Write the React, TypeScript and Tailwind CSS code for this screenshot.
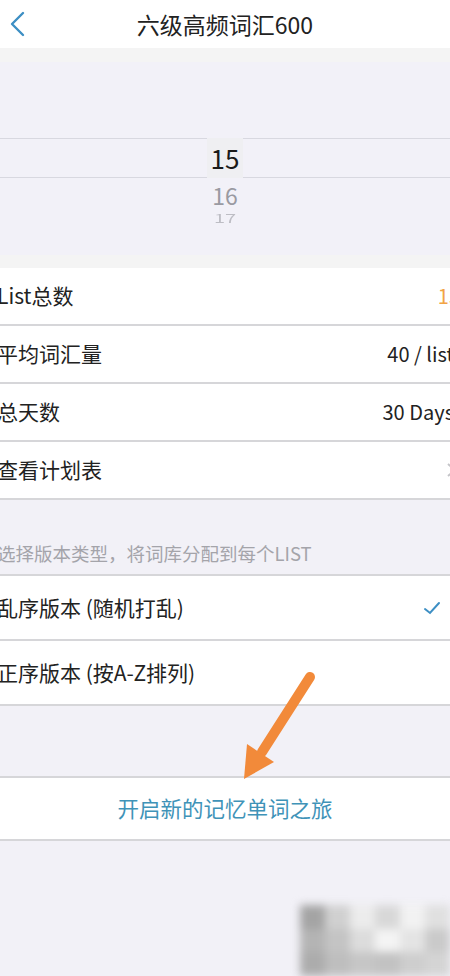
import React from 'react';

const font = { fontFamily: '"Noto Sans CJK SC", "Noto Sans", sans-serif' };

interface RowProps {
  label: string;
  value?: React.ReactNode;
  tall?: boolean;
}

const Row: React.FC<RowProps> = ({ label, value, tall }) => (
  <div
    className={`flex items-center justify-between bg-white border-b-2 border-[#d6d6d9] pl-0 pr-[14px] ${
      tall ? 'h-[65px]' : 'h-[58px]'
    }`}
  >
    <span className="text-[21px] text-[#222] -ml-[3px] whitespace-nowrap">{label}</span>
    {value}
  </div>
);

const App: React.FC = () => {
  return (
    <div className="relative w-[450px] h-[976px] overflow-hidden bg-[#f2f1f7]" style={font}>
      {/* header */}
      <div className="grid grid-cols-[48px_1fr_48px] items-center h-[48px] bg-white">
        <svg width="22" height="30" viewBox="0 0 22 30" className="ml-[6px]">
          <path d="M17 4 L6 15 L17 26" fill="none" stroke="#3d8fc4" strokeWidth="2.4" strokeLinecap="round" strokeLinejoin="round" />
        </svg>
        <h1 className="text-center text-[23px] text-[#222] font-normal">六级高频词汇600</h1>
        <div />
      </div>
      <div className="h-[14px] bg-[#f4f4f4]" />

      {/* picker */}
      <div className="h-[193px] overflow-hidden bg-[#f2f1f8] flex flex-col">
        <div className="h-[76px]" />
        <div className="h-[40px] border-y border-[#d8d8e0] flex items-center justify-center">
          <span className="text-[26px] text-[#1a1a1a] px-[4px] bg-[#efeff2] leading-[40px]">15</span>
        </div>
        <div className="flex flex-col items-center">
          <span className="text-[23px] text-[#9a9aa2] leading-[28px] mt-[3px]">16</span>
          <span className="inline-block text-[20px] text-[#bdbdc4] leading-[18px] scale-y-[0.6]">17</span>
        </div>
      </div>
      <div className="h-[13px] bg-[#f4f4f4]" />

      {/* stats */}
      <div className="-mr-[18px]">
        <Row label="List总数" value={<span className="text-[20px] text-[#f2a444] -mr-[6px]">15</span>} />
        <Row label="平均词汇量" value={<span className="text-[20px] text-[#222]">40 / list</span>} />
        <Row label="总天数" value={<span className="text-[20px] text-[#222]">30 Days</span>} />
        <Row
          label="查看计划表"
          value={
            <svg width="24" height="24" viewBox="0 0 24 24" className="-mr-[12px]">
              <path d="M6 6 L13 12 L6 18" fill="none" stroke="#c4c4c8" strokeWidth="2" />
            </svg>
          }
        />
      </div>

      {/* version section */}
      <div className="h-[74px] flex items-end pb-[6px]">
        <span className="text-[18.5px] text-[#a4a4aa] -ml-[3px] whitespace-nowrap">选择版本类型，将词库分配到每个LIST</span>
      </div>
      <div className="border-t-2 border-[#d6d6d9] -mr-[6px]">
        <Row
          tall
          label="乱序版本 (随机打乱)"
          value={
            <svg width="20" height="20" viewBox="0 0 20 20">
              <path d="M3 11 L8 15 L17 5" fill="none" stroke="#3d8fc4" strokeWidth="2" strokeLinecap="round" />
            </svg>
          }
        />
        <Row tall label="正序版本 (按A-Z排列)" />
      </div>

      <div className="h-[70px]" />
      <div className="h-[65px] bg-white border-y-2 border-[#d6d6d9] flex items-center justify-center">
        <span className="text-[21.5px] text-[#3f93b8]">开启新的记忆单词之旅</span>
      </div>

      {/* blurred watermark */}
      <div className="absolute left-[300px] top-[905px] w-[150px] h-[71px] bg-[#d8d8d8] blur-[4px] grid grid-cols-6 grid-rows-3">
        <div className="bg-[#a4a4a4]" />
        <div className="bg-[#d0d0d0]" />
        <div className="bg-[#ececec]" />
        <div className="bg-[#d8d8d8]" />
        <div className="bg-[#f2f2f2]" />
        <div className="bg-[#e0e0e0]" />
        <div className="bg-[#b4b4b4]" />
        <div className="bg-[#c4c4c4]" />
        <div className="bg-[#dcdcdc]" />
        <div className="bg-[#f4f4f4]" />
        <div className="bg-[#e4e4e4]" />
        <div className="bg-[#cacaca]" />
        <div className="bg-[#acacac]" />
        <div className="bg-[#bebebe]" />
        <div className="bg-[#c6c6c6]" />
        <div className="bg-[#c2c2c2]" />
        <div className="bg-[#cecece]" />
        <div className="bg-[#d4d4d4]" />
      </div>

      {/* annotation arrow */}
      <svg className="absolute left-0 top-0 pointer-events-none" width="450" height="976" viewBox="0 0 450 976">
        <line x1="310" y1="677" x2="262" y2="752" stroke="#f28a3a" strokeWidth="10" strokeLinecap="round" />
        <polygon points="244,779 247,744 274,762" fill="#f28a3a" />
      </svg>
    </div>
  );
};

export default App;
